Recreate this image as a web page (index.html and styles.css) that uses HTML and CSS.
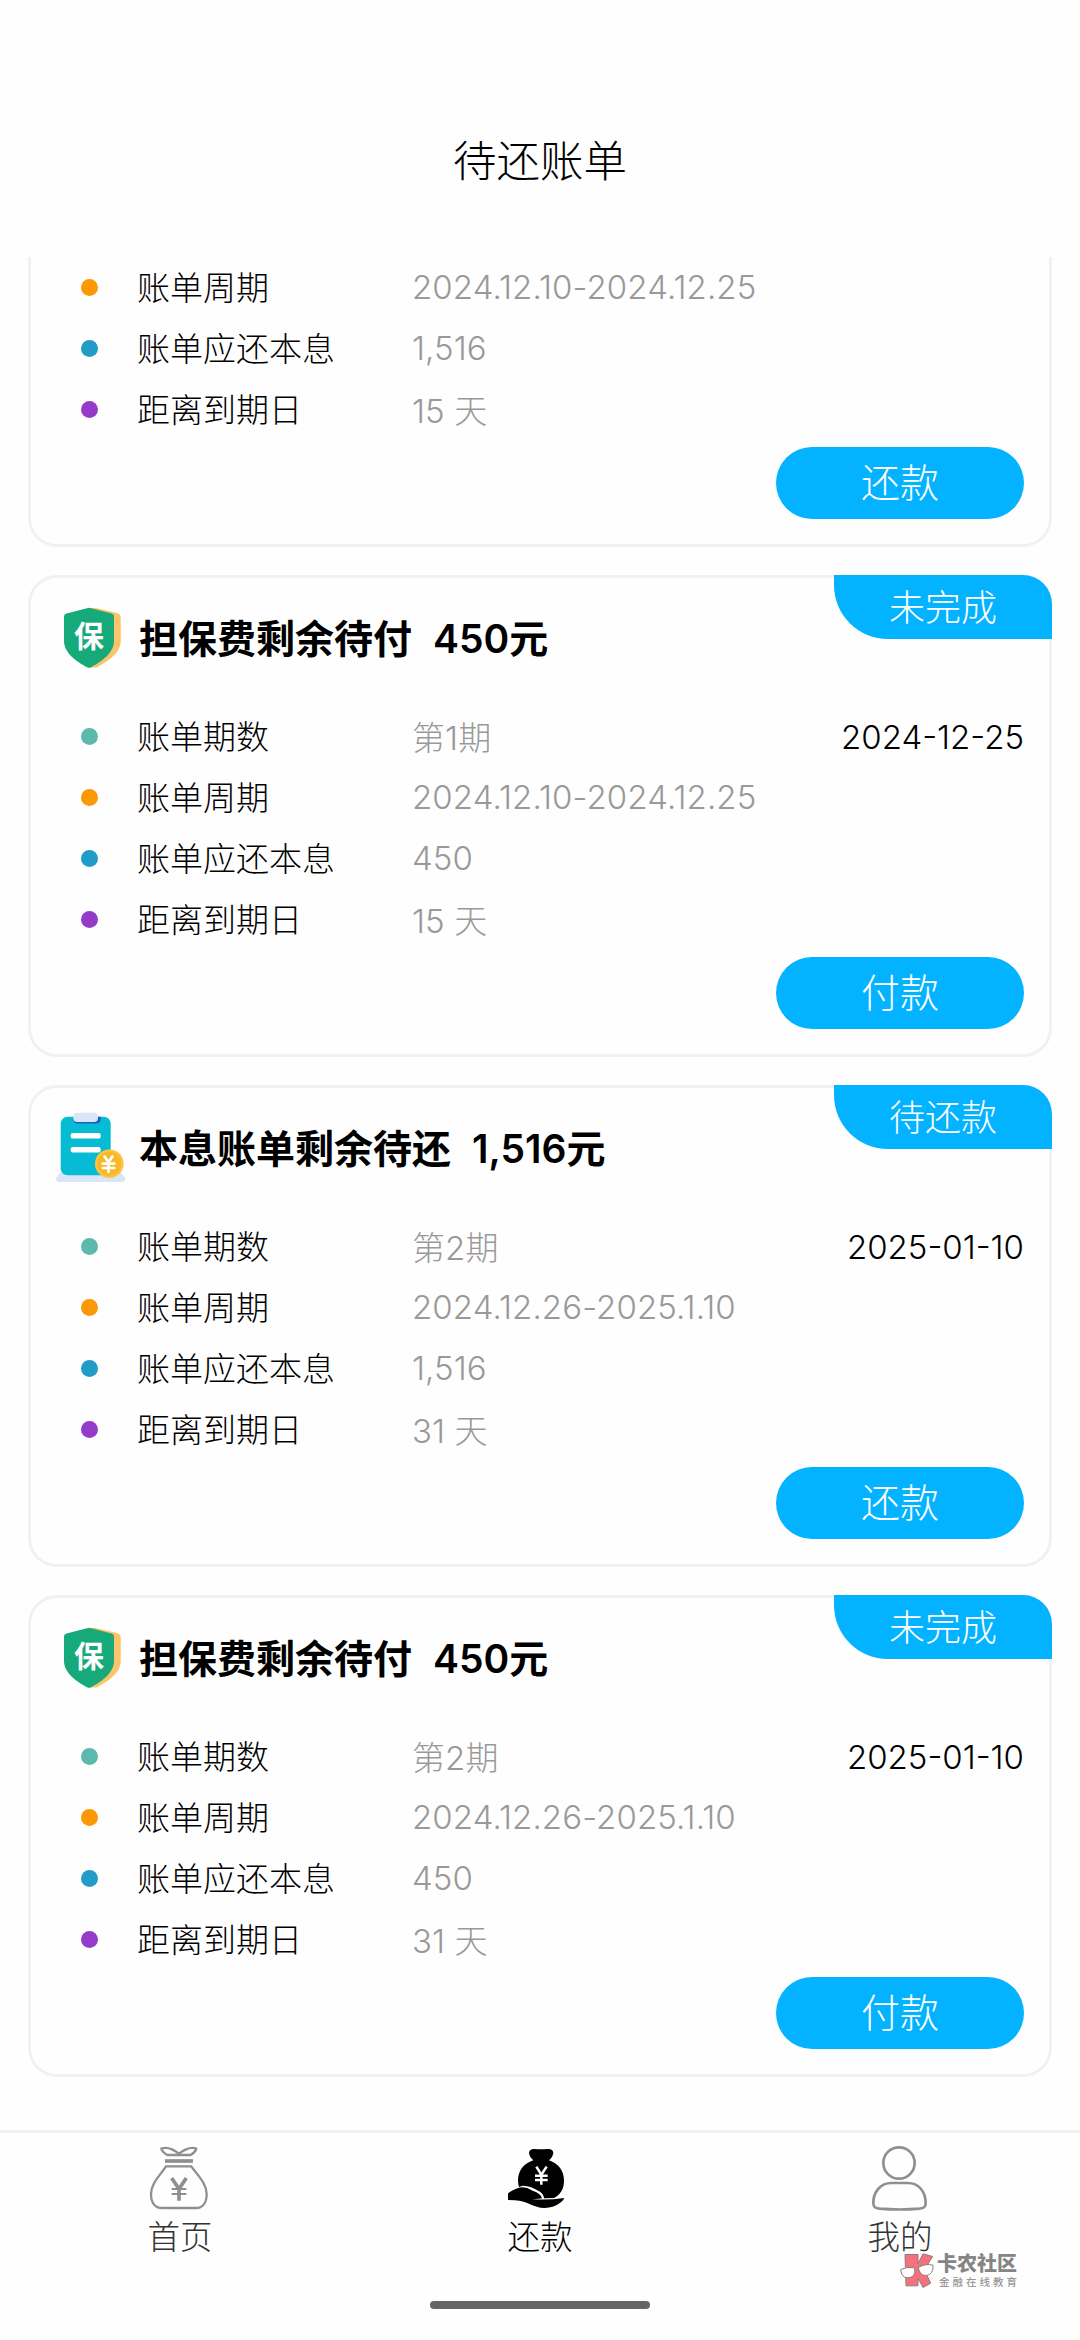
FILE: index.html
```html
<!DOCTYPE html>
<html lang="zh-CN">
<head>
<meta charset="utf-8">
<title>待还账单</title>
<link rel="stylesheet" href="styles.css">
</head>
<body>
<svg class="defs" aria-hidden="true">
  <symbol id="shield" viewBox="0 0 72 72">
    <path d="M42 6 L63 11 Q66.700 12 66.700 15 V39 C66.700 51 54 59 42.500 65.600 H36 V6Z" fill="#fbc469"/>
    <path d="M33 6.200 Q35 5.400 37 6.200 L57.500 11.400 Q60 12 60 14.500 V39 C60 51 47 60 37 65.200 Q35 66.200 33 65.200 C23 60 10 51 10 39 V14.500 Q10 12 12.500 11.400Z" fill="#16a979"/>
    <text x="35" y="45" text-anchor="middle" class="shield-text">保</text>
  </symbol>
  <symbol id="bill" viewBox="0 0 72 72">
    <path d="M7 59.700 H66 L71.300 66 V67 Q71.300 70 68 70 H5 Q2 70 2 67 V66Z" fill="#dbe5fa"/>
    <rect x="6.700" y="4.700" width="50" height="58.600" rx="7" fill="#06bcd4"/>
    <path d="M19.300 4.700 H46.700 V7 Q46.700 11.500 42 11.500 H24 Q19.300 11.500 19.300 7Z" fill="#1565c0"/>
    <rect x="19.300" y=".7" width="24.700" height="9.300" rx="4" fill="#dbe5fa"/>
    <rect x="16.700" y="21" width="30" height="5.600" rx="2.200" fill="#fff"/>
    <rect x="16.700" y="35" width="30" height="5.400" rx="2.200" fill="#fff"/>
    <circle cx="55.300" cy="51.700" r="14.300" fill="#fbc63c"/>
    <circle cx="55.300" cy="51.700" r="12" fill="#f9b82a"/>
    <path d="M50.500 44.500 L54.500 50 L58.500 44.500 M54.500 50 V60 M48.700 51.600 H60.300 M48.700 56 H60.300" fill="none" stroke="#fff" stroke-width="2.700" stroke-linecap="round"/>
  </symbol>
</svg>

<div class="screen">
  <header class="header">待还账单</header>

  <main class="list">
    <section class="card card-cut">
      <div class="row"><i class="dot orange"></i><span class="label">账单周期</span><span class="value">2024.12.10-2024.12.25</span></div>
      <div class="row"><i class="dot blue"></i><span class="label">账单应还本息</span><span class="value">1,516</span></div>
      <div class="row"><i class="dot purple"></i><span class="label">距离到期日</span><span class="value">15 天</span></div>
      <button class="pay">还款</button>
    </section>

    <section class="card">
      <span class="tag">未完成</span>
      <h2 class="head"><svg class="head-icon"><use href="#shield"/></svg><span>担保费剩余待付</span><span class="amount">450元</span></h2>
      <div class="row"><i class="dot teal"></i><span class="label">账单期数</span><span class="value">第1期</span><span class="date">2024-12-25</span></div>
      <div class="row"><i class="dot orange"></i><span class="label">账单周期</span><span class="value">2024.12.10-2024.12.25</span></div>
      <div class="row"><i class="dot blue"></i><span class="label">账单应还本息</span><span class="value">450</span></div>
      <div class="row"><i class="dot purple"></i><span class="label">距离到期日</span><span class="value">15 天</span></div>
      <button class="pay">付款</button>
    </section>

    <section class="card">
      <span class="tag">待还款</span>
      <h2 class="head"><svg class="head-icon"><use href="#bill"/></svg><span>本息账单剩余待还</span><span class="amount">1,516元</span></h2>
      <div class="row"><i class="dot teal"></i><span class="label">账单期数</span><span class="value">第2期</span><span class="date">2025-01-10</span></div>
      <div class="row"><i class="dot orange"></i><span class="label">账单周期</span><span class="value">2024.12.26-2025.1.10</span></div>
      <div class="row"><i class="dot blue"></i><span class="label">账单应还本息</span><span class="value">1,516</span></div>
      <div class="row"><i class="dot purple"></i><span class="label">距离到期日</span><span class="value">31 天</span></div>
      <button class="pay">还款</button>
    </section>

    <section class="card">
      <span class="tag">未完成</span>
      <h2 class="head"><svg class="head-icon"><use href="#shield"/></svg><span>担保费剩余待付</span><span class="amount">450元</span></h2>
      <div class="row"><i class="dot teal"></i><span class="label">账单期数</span><span class="value">第2期</span><span class="date">2025-01-10</span></div>
      <div class="row"><i class="dot orange"></i><span class="label">账单周期</span><span class="value">2024.12.26-2025.1.10</span></div>
      <div class="row"><i class="dot blue"></i><span class="label">账单应还本息</span><span class="value">450</span></div>
      <div class="row"><i class="dot purple"></i><span class="label">距离到期日</span><span class="value">31 天</span></div>
      <button class="pay">付款</button>
    </section>
  </main>

  <nav class="tabs">
    <a class="tab">
      <svg class="tab-icon" viewBox="138 72 204 204" fill="none" stroke="#8f8f8f" stroke-width="7">
        <path d="M202 105 Q188 98 184 86 Q198 80 216 88 Q229 94 237 101 Q245 94 258 88 Q276 80 289 86 Q286 97 272 105Z" stroke-linejoin="round"/>
        <path d="M195 123 H279" stroke-width="11"/>
        <path d="M198 139 H274 C292 165 320 190 320 222 C320 248 308 264 288 264 H186 C165 264 153 248 153 222 C153 190 181 165 198 139Z"/>
        <path d="M215 174 L237 207 L259 174 M237 205 V242" stroke-width="11"/>
        <path d="M215 207 H259 M215 222 H259" stroke-width="6"/>
      </svg>
      <span>首页</span>
    </a>
    <a class="tab active">
      <svg class="tab-icon" viewBox="1218 72 204 204">
        <path d="M1287 98 Q1289 86 1304 87 Q1323 89 1342 87 Q1358 85 1360 98 Q1358 112 1347 121 C1376 131 1392 153 1392 182 C1392 208 1380 225 1362 234 L1332 235 Q1332 224 1320 215 Q1290 196 1268 197 L1257 201 Q1254 192 1254 182 C1254 153 1270 131 1300 121 Q1288 110 1287 98Z" fill="#000"/>
        <path d="M1224 220 Q1248 203 1266 202 Q1282 202 1298 212 Q1324 221 1326 235 Q1310 239 1290 236 Q1335 242 1393 234 C1385 252 1356 264 1333 264 C1300 264 1286 244 1244 241 L1224 240Z" fill="#000"/>
        <path d="M1309 140 L1324 164 L1340 140 M1324 163 V194 M1305 167 H1343 M1305 180 H1343" fill="none" stroke="#fff" stroke-width="7.500"/>
      </svg>
      <span>还款</span>
    </a>
    <a class="tab">
      <svg class="tab-icon" viewBox="198 72 204 204" fill="none" stroke="#8f8f8f" stroke-width="8">
        <circle cx="297" cy="129" r="47"/>
        <path d="M274 189 H324 C356 189 377 215 377 249 C377 262 371 264 358 266 Q298 271 239 266 C226 264 220 262 220 249 C220 215 242 189 274 189Z"/>
      </svg>
      <span>我的</span>
    </a>
    <div class="watermark">
      <svg class="mark-logo" viewBox="298 396 108 110" stroke="#8d7c7c" stroke-width="3" stroke-linejoin="round">
        <path d="M316 403 H355 V430 L370 401 L399 409 L374 449 L393 489 L370 502 L355 474 V497 H319Z" fill="#f4717f"/>
        <path d="M303 448 Q323 438 345 443 Q350 473 323 473 Q305 472 303 448Z M356 442 Q377 429 400 435 Q402 463 380 466 Q360 467 356 442Z M345 445 Q350 439 357 443" fill="#fff"/>
      </svg>
      <div class="mark-text">
        <b>卡农社区</b>
        <small>金融在线教育</small>
      </div>
    </div>
    <div class="home-bar"></div>
  </nav>
</div>
</body>
</html>
```
FILE: styles.css
```css
* { box-sizing: border-box; }
body {
  margin: 0;
  background: #fefefe;
  color: #000;
  font-family: Inter, "Noto Sans CJK SC", sans-serif;
  font-weight: 300;
}
.defs { display: none; }
.screen {
  width: 1080px;
  height: 2340px;
  display: flex;
  flex-direction: column;
  overflow: hidden;
}
.header {
  height: 257px;
  flex: none;
  padding-top: 129px;
  line-height: 64px;
  text-align: center;
  font-size: 43.500px;
}
.list {
  flex: 1;
  padding: 0 28px;
  display: flex;
  flex-direction: column;
  gap: 28px;
}
.card {
  position: relative;
  height: 482px;
  flex: none;
  padding: 24px 25px 25px 23px;
  border: 3px solid #f1f1f1;
  border-radius: 29px;
  display: flex;
  flex-direction: column;
}
.card-cut {
  height: 290px;
  padding-top: 0;
  border-top: 0;
  border-radius: 0 0 29px 29px;
}
.tag {
  position: absolute;
  top: -3px;
  right: -3px;
  width: 218px;
  height: 64px;
  border-radius: 0 29px 0 54px;
  background: #04b3ff;
  color: #fff;
  font-size: 36px;
  line-height: 66px;
  text-align: center;
}
.head {
  margin: 0 0 32px;
  height: 72px;
  display: flex;
  align-items: center;
  font-size: 39px;
  font-weight: 600;
  white-space: nowrap;
}
.head span { padding-bottom: 5px; }
.head-icon { width: 72px; height: 72px; margin-right: 13px; }
.amount { margin-left: 21px; }
.shield-text { font-size: 30px; font-weight: 700; fill: #fff; }
.row {
  height: 61px;
  flex: none;
  padding-left: 27px;
  display: flex;
  align-items: center;
  font-size: 33px;
  white-space: nowrap;
}
.dot { width: 17px; height: 17px; border-radius: 50%; margin-right: 39px; }
.teal { background: #5db8ae; }
.orange { background: #fb9804; }
.blue { background: #219cc6; }
.purple { background: #953bc9; }
.label { width: 275px; padding-bottom: 3px; }
.value { color: #999; letter-spacing: .1px; padding-bottom: 1px; }
.date { margin-left: auto; }
.pay {
  width: 248px;
  height: 72px;
  margin-top: auto;
  align-self: flex-end;
  padding: 0;
  border: 0;
  border-radius: 36px;
  background: #04b3ff;
  color: #fff;
  font: inherit;
  font-size: 39px;
  line-height: 72px;
}
.tabs {
  position: relative;
  height: 210px;
  flex: none;
  padding-top: 11px;
  border-top: 3px solid #f1f1f1;
  display: grid;
  grid-template-columns: repeat(3, 360px);
}
.tab {
  display: flex;
  flex-direction: column;
  align-items: center;
  gap: 6px;
  color: #333;
  font-size: 32.500px;
  line-height: 40px;
}
.active { color: #000; }
.tab-icon { width: 68px; height: 68px; }
.home-bar {
  position: absolute;
  left: 430px;
  top: 168px;
  width: 220px;
  height: 8px;
  border-radius: 4px;
  background: #666;
}
.watermark {
  position: absolute;
  left: 899px;
  top: 119px;
  display: flex;
  gap: 2px;
}
.mark-logo { width: 36px; height: 37px; }
.mark-text { display: flex; flex-direction: column; white-space: nowrap; padding-top: 1px; }
.mark-text b { font-size: 20px; line-height: 23px; font-weight: 900; color: #858585; }
.mark-text small { font-size: 10.500px; line-height: 13px; letter-spacing: 3px; font-weight: 500; color: #999; margin-left: 2px; }
```
